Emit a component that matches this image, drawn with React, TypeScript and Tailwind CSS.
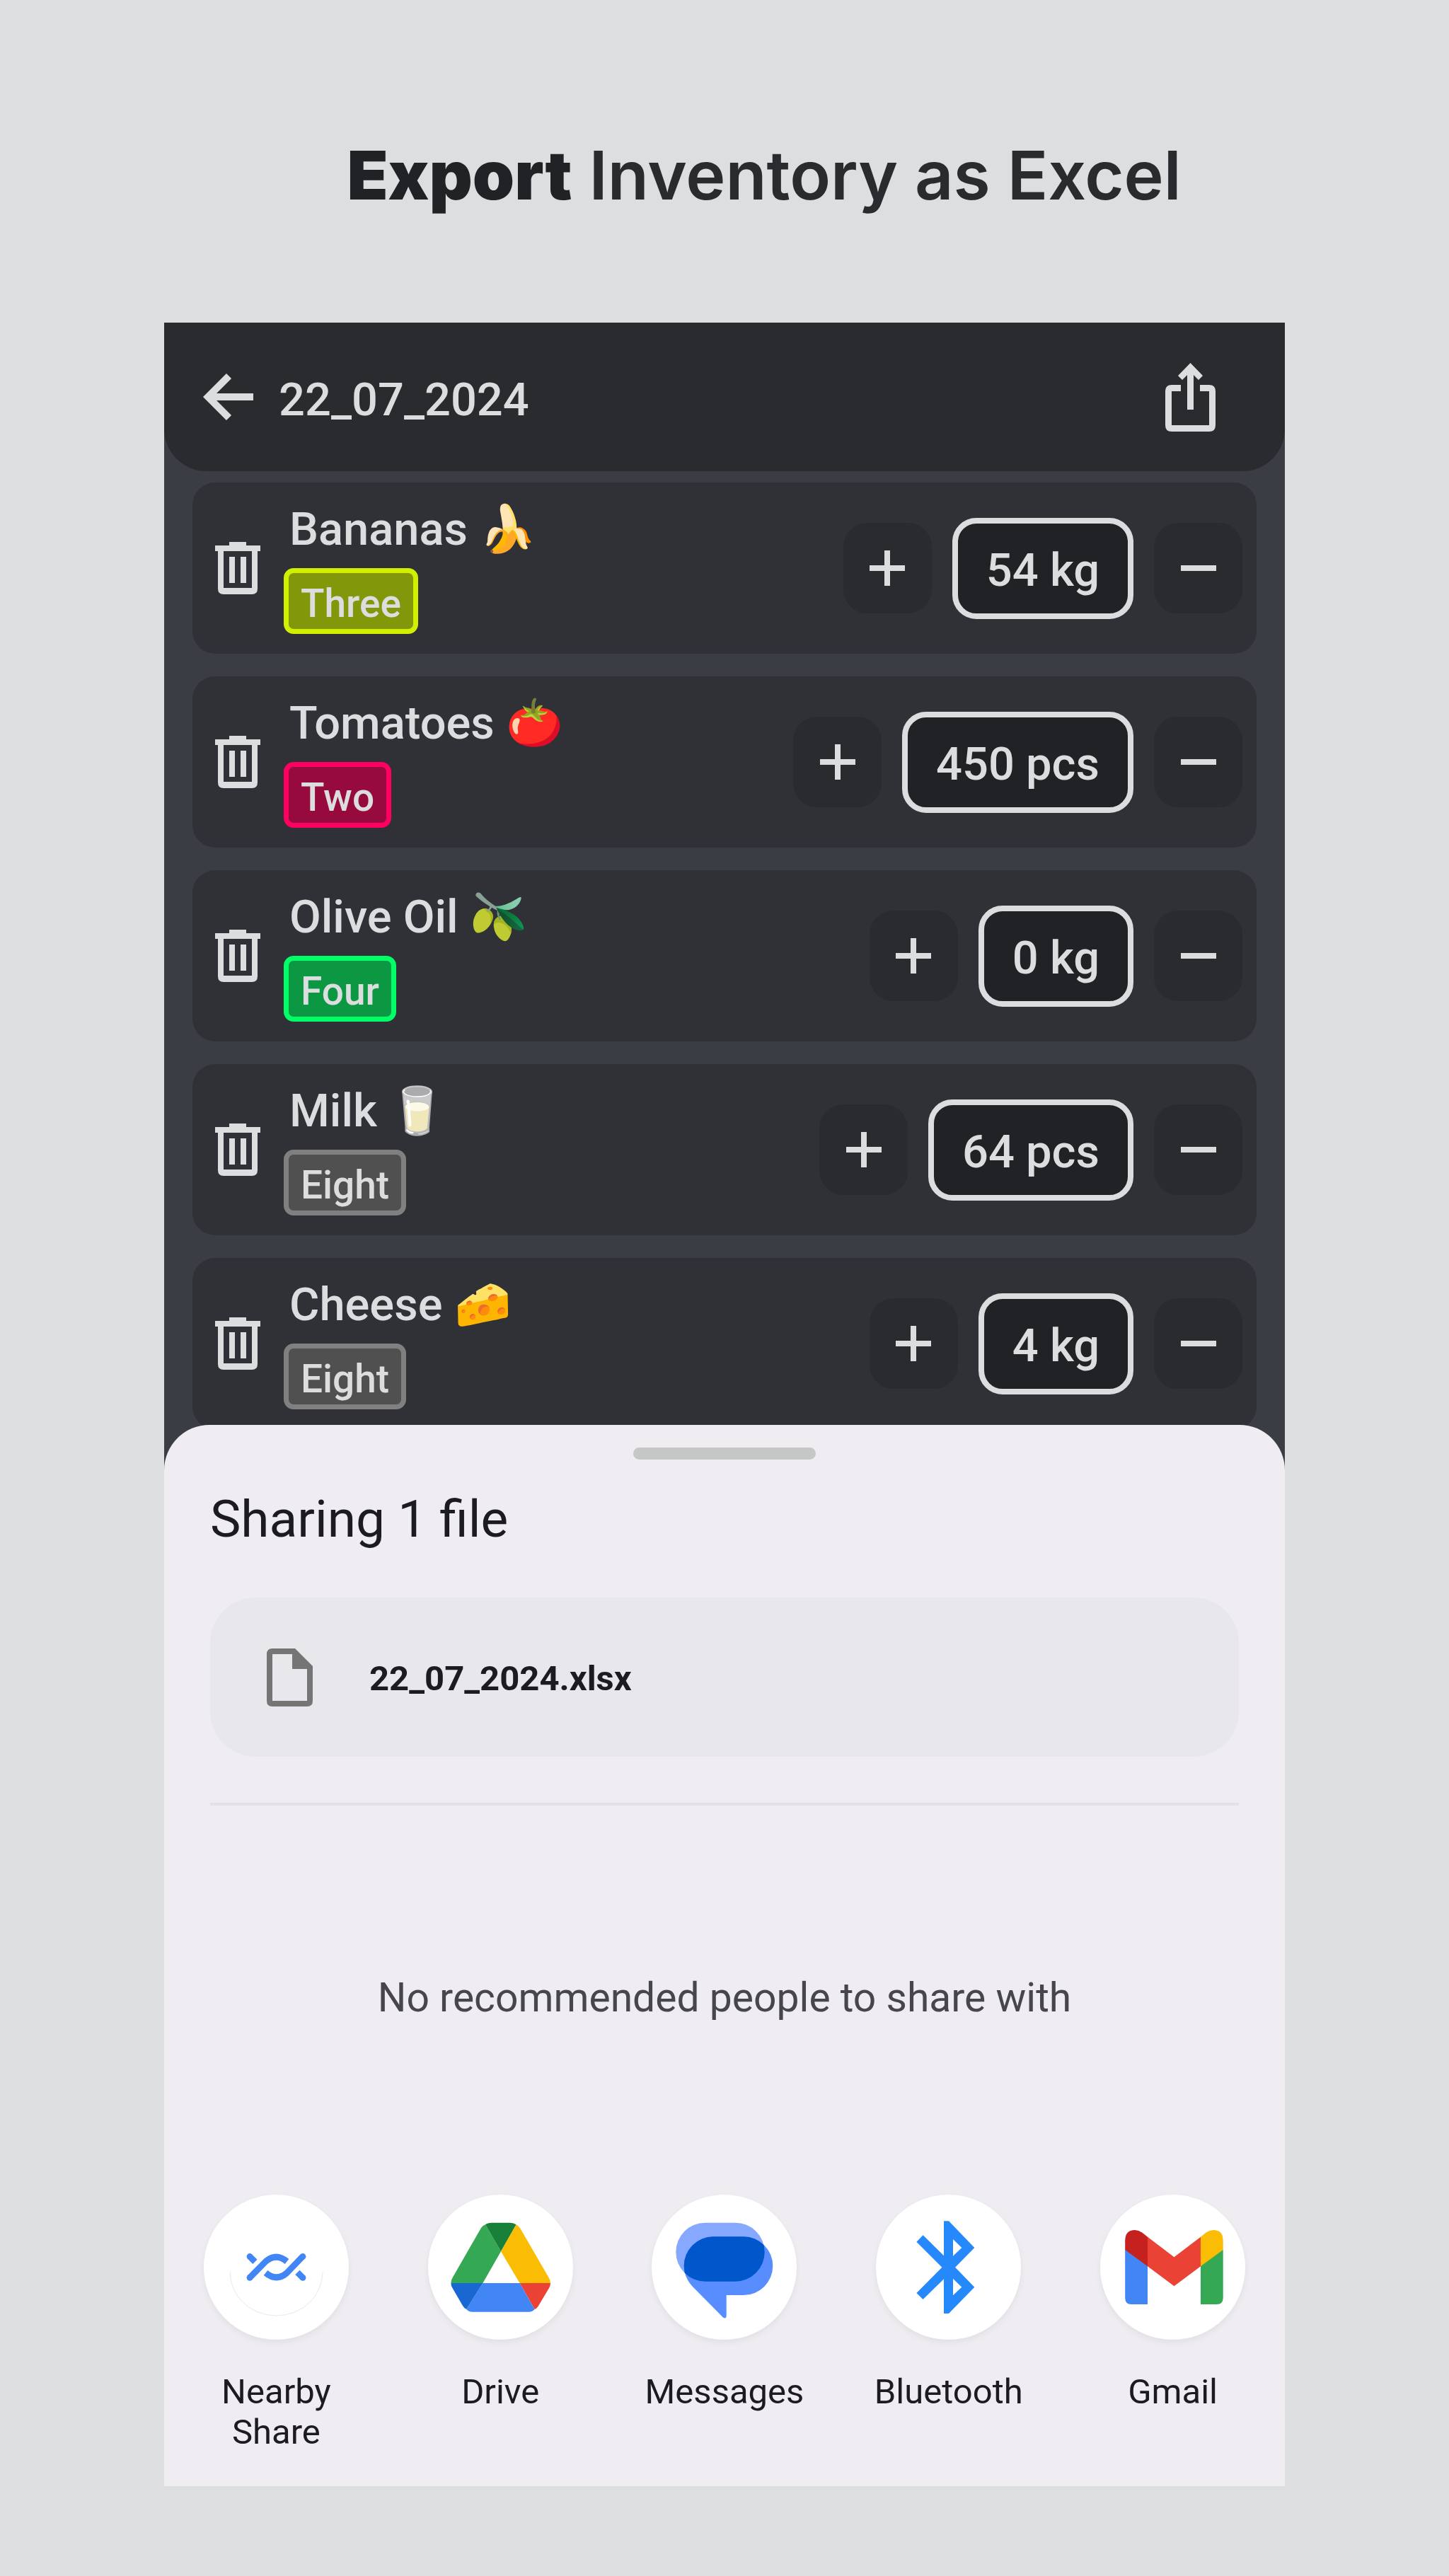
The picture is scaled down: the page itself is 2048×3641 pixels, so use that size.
import React from 'react';

type Item = { name: string; emoji: string; tag: string; tagStyle: string; amount: string };

const items: Item[] = [
  { name: 'Bananas', emoji: '🍌', tag: 'Three', tagStyle: 'border-[#d0f000] bg-[#83970b]', amount: '54 kg' },
  { name: 'Tomatoes', emoji: '🍅', tag: 'Two', tagStyle: 'border-[#ff0062] bg-[#970a3e]', amount: '450 pcs' },
  { name: 'Olive Oil', emoji: '🫒', tag: 'Four', tagStyle: 'border-[#00ff66] bg-[#0c9843]', amount: '0 kg' },
  { name: 'Milk', emoji: '🥛', tag: 'Eight', tagStyle: 'border-[#808080] bg-[#505050]', amount: '64 pcs' },
  { name: 'Cheese', emoji: '🧀', tag: 'Eight', tagStyle: 'border-[#808080] bg-[#505050]', amount: '4 kg' },
];

const BackIcon = () => (
  <svg viewBox="0 0 71 66" className="h-[66px] w-[71px]" fill="none" stroke="currentColor" strokeWidth="10">
    <path d="M71 33H8M36.5 3.5 7 33l29.500 29.500" />
  </svg>
);

const ShareIcon = () => (
  <svg viewBox="0 0 71 97" className="h-[97px] w-[71px]" fill="currentColor">
    <path d="M35.500 0 53 18l-6 6-7-7v49h-9V17l-7 7-6-6z" />
    <path d="M22 31v9H9v48h53V40H49v-9h13q9 0 9 9v48q0 9-9 9H9q-9 0-9-9V40q0-9 9-9z" />
  </svg>
);

const TrashIcon = () => (
  <svg viewBox="0 0 64 74" className="h-[74px] w-[64px]" fill="currentColor">
    <path d="M20 0h24v5h20v8h-4v53q0 8-8 8H12q-8 0-8-8V13H0V5h20zM12 13v52h40V13z" fillRule="evenodd" />
    <path d="M20 21h8v37h-8zM36 21h8v37h-8z" />
  </svg>
);

const PlusIcon = () => (
  <svg viewBox="0 0 50 50" className="size-[50px]" fill="currentColor">
    <path d="M21 0h8v21h21v8H29v21h-8V29H0v-8h21z" />
  </svg>
);

const MinusIcon = () => (
  <svg viewBox="0 0 50 50" className="size-[50px]" fill="currentColor">
    <path d="M0 21h50v8H0z" />
  </svg>
);

const FileIcon = () => (
  <svg viewBox="0 0 65 82" className="h-[82px] w-[65px]" fill="#757575">
    <path d="M8 0h32l25 25v49q0 8-8 8H8q-8 0-8-8V8q0-8 8-8zM8 8v66h49V29H36V8z" fillRule="evenodd" />
  </svg>
);

const NearbyIcon = () => (
  <svg viewBox="0 0 205 205" className="size-full">
    <path d="M37 109a65.500 62 0 0 0 131 0" fill="none" stroke="#e9e9e9" strokeWidth="1" />
    <g fill="none" stroke="#4285f4" strokeWidth="8.800">
      <path d="M64.900 117.300 88 94q14.500-12 29.500.5" />
      <path d="M139.900 87.300 117 111q-14.500 12-29.500-.5" />
      <path d="M64.900 87.300l7.500 7.500M139.900 117.300l-7.500-7.500" />
    </g>
    <g fill="#4285f4">
      <circle cx="65" cy="117.300" r="4.400" />
      <circle cx="65" cy="87.500" r="4.400" />
      <circle cx="140" cy="117.300" r="4.400" />
      <circle cx="140" cy="87.500" r="4.400" />
    </g>
  </svg>
);

const DriveIcon = () => (
  <svg viewBox="0 0 205 205" className="size-full">
    <path fill="#34a853" d="M81 42.300 103 80.300 77.400 125h-45q0-4 2.100-7.500L75 47q2.500-3.500 6-4.700z" />
    <path fill="#188038" d="M81 42.300q3-2.600 9-2.600h26q5 0 8.600 2.600L103 80.300z" />
    <path fill="#fbbc04" d="M124.600 42.300q3.400 1.500 5.900 5.700l40 69q2.500 4 2.500 8h-43.400L103 80.300z" />
    <path fill="#ea4335" d="M129.600 125H173q0 4-2 7l-15.500 26q-2 3-4.900 4z" />
    <path fill="#4285f4" d="M77.400 125h52.200l21 37q-2.600 3.700-8.600 3.700H63q-6 0-8.800-3.700z" />
    <path fill="#1967d2" d="M32.400 125h45l-23.200 37q-3.200-1.500-5.200-5l-14.500-25q-2.100-3.500-2.100-7z" />
  </svg>
);

const MessagesIcon = () => (
  <svg viewBox="0 0 205 205" className="size-full">
    <clipPath id="front-bubble">
      <rect x="45.700" y="59.300" width="125.600" height="82.800" rx="41.400" />
    </clipPath>
    <rect x="34.300" y="39.700" width="125.400" height="83" rx="41.500" fill="#87a8ff" />
    <path
      fill="#578dff"
      d="M87.100 59.300h42.800a41.400 41.400 0 0 1 0 82.800h-24.200v29q0 5-4.500 2.600L58 130a41.400 41.400 0 0 1 29.100-70.700z"
    />
    <rect x="34.300" y="39.700" width="125.400" height="83" rx="41.500" fill="#0057cc" clipPath="url(#front-bubble)" />
  </svg>
);

const BluetoothIcon = () => (
  <svg viewBox="0 0 205 205" className="size-full">
    <path
      fill="#2589fb"
      fillRule="evenodd"
      d="M96 37.300h7L139.300 75l-27.200 27.700 27.200 28L103 168h-7v-48.700L66.600 148l-9.200-9 36-36.300-36-36 9.200-9.400L96 86.300zM109 63v23.700L121.300 75zM109 118.700v23.600l12.300-11.600z"
    />
  </svg>
);

const GmailIcon = () => (
  <svg viewBox="0 0 205 205" className="size-full">
    <path fill="#4285f4" d="M35.200 77v69q0 9 9 9H67v-55z" />
    <path fill="#34a853" d="M173.700 77v69q0 9-9 9H142v-55z" />
    <path fill="#ea4335" d="M67 59.700l37.500 28.600L142 59.700v41.600l-37.500 28-37.500-28z" />
    <path fill="#c5221f" d="M35.200 78V65q0-15 14-15 5 0 10 3.500l7.800 6.200v41.600z" />
    <path fill="#fbbc04" d="M173.700 78V65q0-15-14-15-5 0-10 3.500l-7.700 6.200v41.600z" />
  </svg>
);

const targets = [
  { label: 'Nearby Share', Icon: NearbyIcon },
  { label: 'Drive', Icon: DriveIcon },
  { label: 'Messages', Icon: MessagesIcon },
  { label: 'Bluetooth', Icon: BluetoothIcon },
  { label: 'Gmail', Icon: GmailIcon },
];

function InventoryRow({ item }: { item: Item }) {
  return (
    <li className="flex items-center justify-between rounded-[32px] bg-[#303136] py-7 pr-5 pl-8">
      <div className="flex items-center gap-[33px]">
        <button type="button" aria-label={`Delete ${item.name}`}>
          <TrashIcon />
        </button>
        <div className="flex flex-col items-start gap-[17px]">
          <span className="pl-2 text-[65px] leading-[76px] font-medium whitespace-nowrap">
            {item.name} {item.emoji}
          </span>
          <span className={`rounded-[14px] border-[7px] px-[17px] pt-2 text-[55px] leading-[71px] font-medium ${item.tagStyle}`}>
            {item.tag}
          </span>
        </div>
      </div>
      <div className="flex items-center gap-[29px]">
        <button
          type="button"
          aria-label={`Increase ${item.name}`}
          className="flex h-32 w-[125px] items-center justify-center rounded-[34px] bg-[#2a2b2f]"
        >
          <PlusIcon />
        </button>
        <button
          type="button"
          className="rounded-[34px] border-8 border-[#dcdddf] bg-[#202226] px-10 pt-1.5 text-[65px] leading-[121px] font-medium whitespace-nowrap"
        >
          {item.amount}
        </button>
        <button
          type="button"
          aria-label={`Decrease ${item.name}`}
          className="flex h-32 w-[125px] items-center justify-center rounded-[34px] bg-[#2a2b2f]"
        >
          <MinusIcon />
        </button>
      </div>
    </li>
  );
}

export default function App() {
  return (
    <main className="min-h-screen bg-[#dcdedf] pb-[127px] font-['Roboto',sans-serif]">
      <h1 className="pt-[184px] pb-[144px] pl-16 text-center font-['Inter',sans-serif] text-[95px] leading-[128px] font-semibold text-[#2a2b2f] lg:pl-28">
        <span className="font-black text-[#202226]">Export</span> Inventory as Excel
      </h1>

      <div className="mx-auto w-full max-w-[1584px] bg-[#3b3d45] text-[#dcdddf]">
        <header className="flex h-[210px] items-center justify-between rounded-b-[60px] bg-[#2a2b2e] pr-[98px] pl-[55px]">
          <div className="flex items-center gap-9">
            <button type="button" aria-label="Back">
              <BackIcon />
            </button>
            <h2 className="pt-2 text-[65px] leading-[76px] font-medium">22_07_2024</h2>
          </div>
          <button type="button" aria-label="Share">
            <ShareIcon />
          </button>
        </header>

        <ul className="flex flex-col gap-8 px-10 pt-4">
          {items.map((item) => (
            <InventoryRow key={item.name} item={item} />
          ))}
        </ul>

        <section className="relative -mt-1.5 rounded-t-[64px] bg-[#efedf2] pt-8 pb-12 text-[#1b1b20]">
          <div className="mx-auto h-[17px] w-[258px] rounded-full bg-[#c5c7c6]" />
          <div className="px-[65px]">
            <h2 className="mt-10 text-[73px] leading-[88px]">Sharing 1 file</h2>
            <div className="mt-[67px] flex h-[225px] items-center gap-20 rounded-[64px] bg-[#e8e7eb] pl-20">
              <FileIcon />
              <span className="pt-1 text-[49px] leading-[60px] font-bold">22_07_2024.xlsx</span>
            </div>
            <hr className="mt-[65px] border-t-4 border-[#e2e1e6]" />
            <p className="mt-[236px] text-center text-[57px] leading-[72px] text-[#46464b]">
              No recommended people to share with
            </p>
          </div>
          <div className="mt-[242px] grid grid-cols-5">
            {targets.map(({ label, Icon }) => (
              <button key={label} type="button" className="flex flex-col items-center gap-[45px]">
                <span className="size-[205px] rounded-full bg-white shadow-[0_4px_10px_rgba(0,0,0,0.06)]">
                  <Icon />
                </span>
                <span className="max-w-60 text-[49px] leading-[57px]">{label}</span>
              </button>
            ))}
          </div>
        </section>
      </div>
    </main>
  );
}
